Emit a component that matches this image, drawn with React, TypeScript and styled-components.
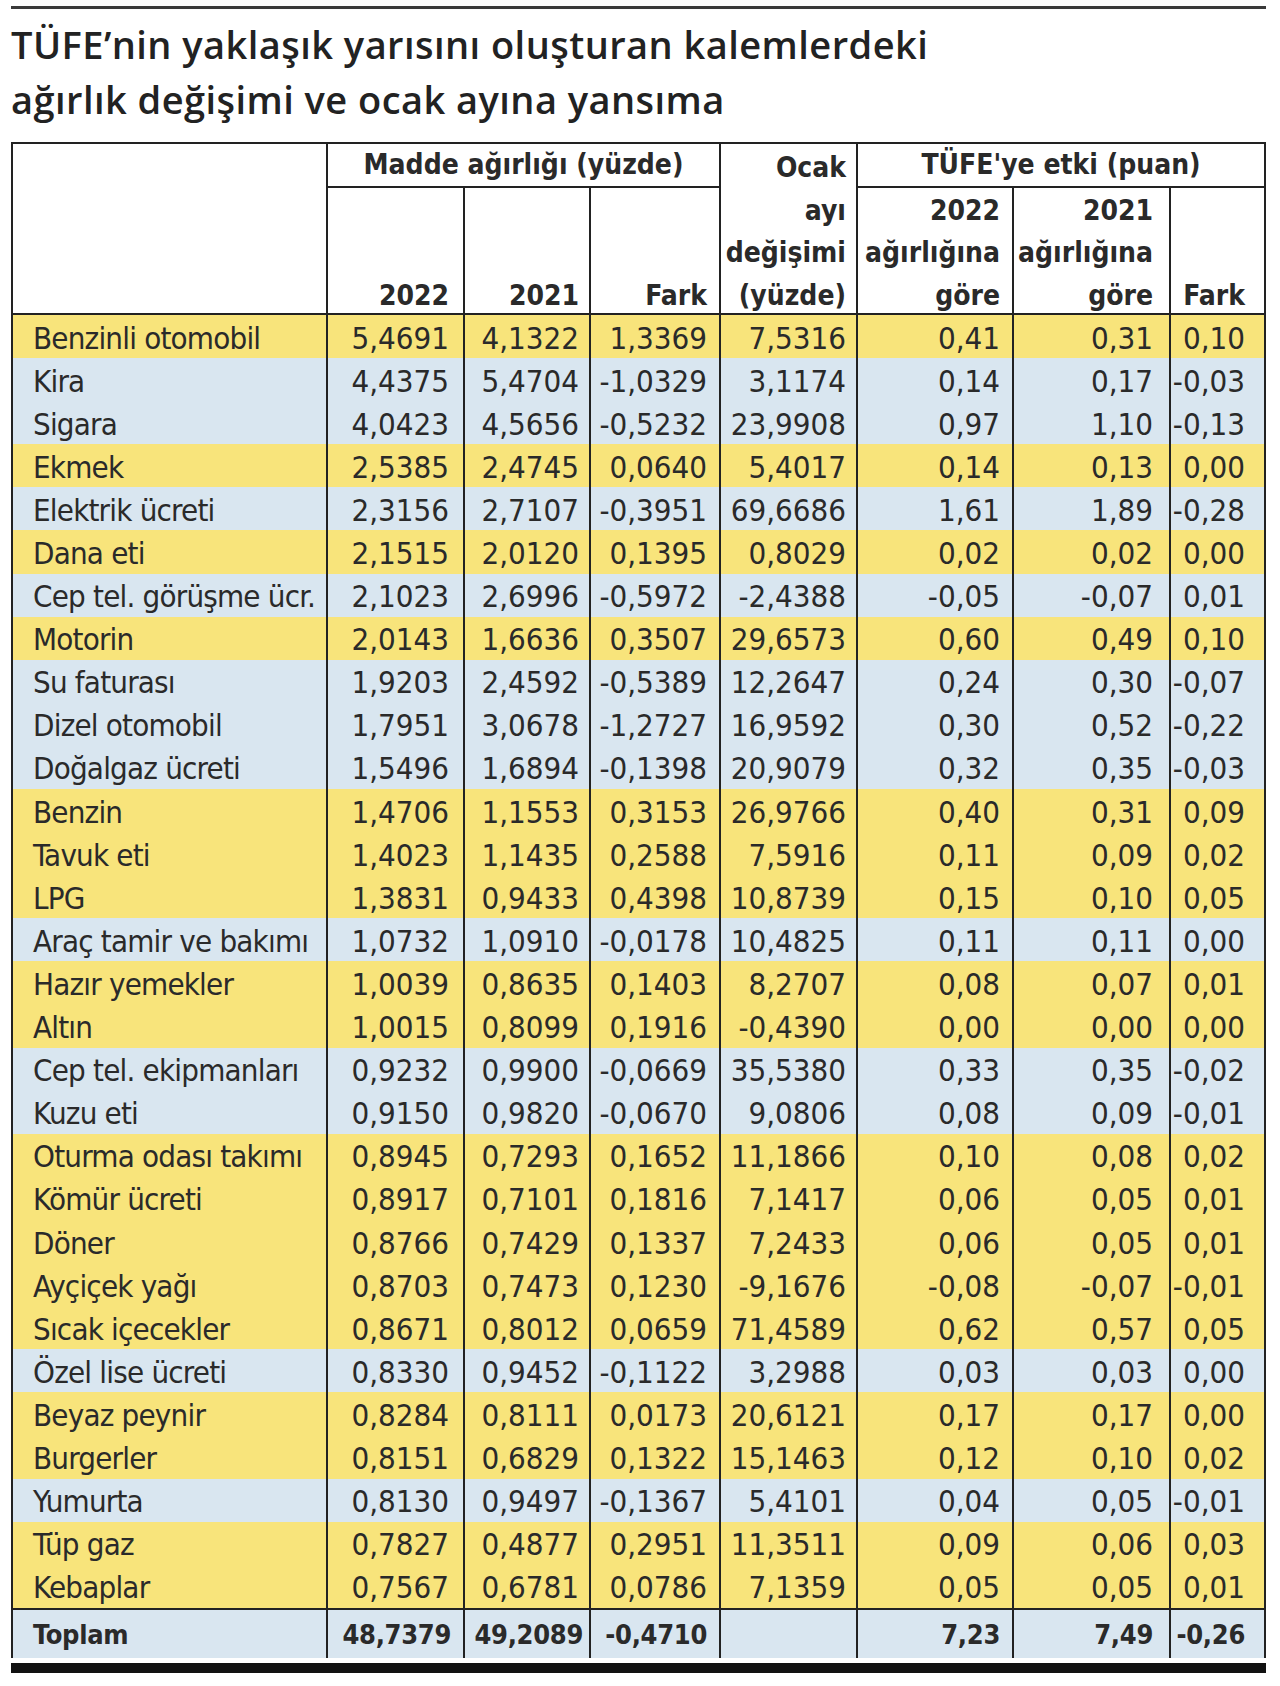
import React from "react";
import styled, { createGlobalStyle, css } from "styled-components";

const GlobalStyle = createGlobalStyle`
  html, body { margin: 0; padding: 0; background: #ffffff; }
  body { font-family: "DejaVu Sans Condensed", "DejaVu Sans", sans-serif; color: #2a2a2a; }
`;

type Tone = "yellow" | "blue" | "white";

const toneColor: Record<Tone, string> = {
  yellow: "#f8e47b",
  blue: "#d9e6f0",
  white: "#ffffff",
};

const COLS = [313, 137, 126, 130, 137, 156, 157, 95];
const PAD = [0, 14, 10, 12, 10, 12, 16, 19];
const TOTAL_PAD = [0, 12, 6, 12, 10, 12, 16, 19];

const Page = styled.div`
  width: 1255px;
  padding: 6px 0 0 11px;
`;

const TopRule = styled.div`
  height: 3px;
  background: #3a3a3a;
`;

const Title = styled.h1`
  margin: 8px 0 15px 0;
  font-family: "Open Sans", "DejaVu Sans", sans-serif;
  font-weight: 600;
  font-size: 38px;
  line-height: 55px;
  letter-spacing: 0.45px;
  color: #222;
`;

const Sheet = styled.div`
  display: grid;
  grid-template-columns: ${COLS.map((c) => `${c}px`).join(" ")};
  grid-template-rows: 44px 127px repeat(30, 43.1px) 50px;
  border: 2px solid #222;
  border-bottom: none;
  font-family: "DejaVu Sans Condensed", "DejaVu Sans", sans-serif;
  font-stretch: condensed;
`;

const HeadCell = styled.div<{
  $col: number;
  $span?: number;
  $row: number;
  $rowSpan?: number;
  $align?: "center" | "end";
}>`
  grid-column: ${(p) => p.$col} / span ${(p) => p.$span ?? 1};
  grid-row: ${(p) => p.$row} / span ${(p) => p.$rowSpan ?? 1};
  background: #fff;
  border-left: ${(p) => (p.$col > 1 ? "2px solid #222" : "none")};
  border-bottom: 2px solid #222;
  display: flex;
  flex-direction: column;
  justify-content: ${(p) => (p.$align === "center" ? "center" : "flex-end")};
  align-items: ${(p) => (p.$align === "center" ? "center" : "flex-end")};
  padding-right: ${(p) => (p.$align === "center" ? 0 : PAD[p.$col - 1])}px;
  font-weight: 700;
  font-size: 28px;
  line-height: 42.5px;
  color: #2a2a2a;
  text-align: right;
  white-space: nowrap;
`;

const HeadLines = styled.div`
  margin-bottom: -4px;
`;

const Cell = styled.div<{ $col: number; $tone: Tone; $total?: boolean }>`
  background: ${(p) => toneColor[p.$tone]};
  border-left: ${(p) => (p.$col > 1 ? "2px solid #222" : "none")};
  ${(p) =>
    p.$total &&
    css`
      border-top: 2px solid #222;
    `}
  display: flex;
  align-items: center;
  justify-content: ${(p) => (p.$col === 1 ? "flex-start" : "flex-end")};
  padding-left: ${(p) => (p.$col === 1 ? 20 : 0)}px;
  padding-right: ${(p) => (p.$total ? TOTAL_PAD[p.$col - 1] : PAD[p.$col - 1])}px;
  padding-top: 2px;
  font-size: ${(p) => (p.$total ? 27 : 31)}px;
  font-weight: ${(p) => (p.$total ? 700 : 400)};
  letter-spacing: ${(p) => (p.$col === 1 && !p.$total ? "-0.8px" : p.$total ? "-0.3px" : "0")};
  color: #2a2a2a;
  white-space: nowrap;
  overflow: hidden;
`;

const BottomBar = styled.div`
  height: 10px;
  margin-top: 5px;
  background: #111;
`;

const rows: string[][] = [
  ["Benzinli otomobil", "5,4691", "4,1322", "1,3369", "7,5316", "0,41", "0,31", "0,10"],
  ["Kira", "4,4375", "5,4704", "-1,0329", "3,1174", "0,14", "0,17", "-0,03"],
  ["Sigara", "4,0423", "4,5656", "-0,5232", "23,9908", "0,97", "1,10", "-0,13"],
  ["Ekmek", "2,5385", "2,4745", "0,0640", "5,4017", "0,14", "0,13", "0,00"],
  ["Elektrik ücreti", "2,3156", "2,7107", "-0,3951", "69,6686", "1,61", "1,89", "-0,28"],
  ["Dana eti", "2,1515", "2,0120", "0,1395", "0,8029", "0,02", "0,02", "0,00"],
  ["Cep tel. görüşme ücr.", "2,1023", "2,6996", "-0,5972", "-2,4388", "-0,05", "-0,07", "0,01"],
  ["Motorin", "2,0143", "1,6636", "0,3507", "29,6573", "0,60", "0,49", "0,10"],
  ["Su faturası", "1,9203", "2,4592", "-0,5389", "12,2647", "0,24", "0,30", "-0,07"],
  ["Dizel otomobil", "1,7951", "3,0678", "-1,2727", "16,9592", "0,30", "0,52", "-0,22"],
  ["Doğalgaz ücreti", "1,5496", "1,6894", "-0,1398", "20,9079", "0,32", "0,35", "-0,03"],
  ["Benzin", "1,4706", "1,1553", "0,3153", "26,9766", "0,40", "0,31", "0,09"],
  ["Tavuk eti", "1,4023", "1,1435", "0,2588", "7,5916", "0,11", "0,09", "0,02"],
  ["LPG", "1,3831", "0,9433", "0,4398", "10,8739", "0,15", "0,10", "0,05"],
  ["Araç tamir ve bakımı", "1,0732", "1,0910", "-0,0178", "10,4825", "0,11", "0,11", "0,00"],
  ["Hazır yemekler", "1,0039", "0,8635", "0,1403", "8,2707", "0,08", "0,07", "0,01"],
  ["Altın", "1,0015", "0,8099", "0,1916", "-0,4390", "0,00", "0,00", "0,00"],
  ["Cep tel. ekipmanları", "0,9232", "0,9900", "-0,0669", "35,5380", "0,33", "0,35", "-0,02"],
  ["Kuzu eti", "0,9150", "0,9820", "-0,0670", "9,0806", "0,08", "0,09", "-0,01"],
  ["Oturma odası takımı", "0,8945", "0,7293", "0,1652", "11,1866", "0,10", "0,08", "0,02"],
  ["Kömür ücreti", "0,8917", "0,7101", "0,1816", "7,1417", "0,06", "0,05", "0,01"],
  ["Döner", "0,8766", "0,7429", "0,1337", "7,2433", "0,06", "0,05", "0,01"],
  ["Ayçiçek yağı", "0,8703", "0,7473", "0,1230", "-9,1676", "-0,08", "-0,07", "-0,01"],
  ["Sıcak içecekler", "0,8671", "0,8012", "0,0659", "71,4589", "0,62", "0,57", "0,05"],
  ["Özel lise ücreti", "0,8330", "0,9452", "-0,1122", "3,2988", "0,03", "0,03", "0,00"],
  ["Beyaz peynir", "0,8284", "0,8111", "0,0173", "20,6121", "0,17", "0,17", "0,00"],
  ["Burgerler", "0,8151", "0,6829", "0,1322", "15,1463", "0,12", "0,10", "0,02"],
  ["Yumurta", "0,8130", "0,9497", "-0,1367", "5,4101", "0,04", "0,05", "-0,01"],
  ["Tüp gaz", "0,7827", "0,4877", "0,2951", "11,3511", "0,09", "0,06", "0,03"],
  ["Kebaplar", "0,7567", "0,6781", "0,0786", "7,1359", "0,05", "0,05", "0,01"],
];

const total = ["Toplam", "48,7379", "49,2089", "-0,4710", "", "7,23", "7,49", "-0,26"];

const lines = (items: string[]) => (
  <HeadLines>
    {items.map((t, i) => (
      <div key={i}>{t}</div>
    ))}
  </HeadLines>
);

export default function App() {
  return (
    <>
      <GlobalStyle />
      <Page>
        <TopRule />
        <Title>
          TÜFE’nin yaklaşık yarısını oluşturan kalemlerdeki
          <br />
          ağırlık değişimi ve ocak ayına yansıma
        </Title>
        <Sheet>
          <HeadCell $col={1} $row={1} $rowSpan={2} />
          <HeadCell $col={2} $span={3} $row={1} $align="center">
            Madde ağırlığı (yüzde)
          </HeadCell>
          <HeadCell $col={5} $row={1} $rowSpan={2}>
            {lines(["Ocak", "ayı", "değişimi", "(yüzde)"])}
          </HeadCell>
          <HeadCell $col={6} $span={3} $row={1} $align="center">
            TÜFE'ye etki (puan)
          </HeadCell>
          <HeadCell $col={2} $row={2}>{lines(["2022"])}</HeadCell>
          <HeadCell $col={3} $row={2}>{lines(["2021"])}</HeadCell>
          <HeadCell $col={4} $row={2}>{lines(["Fark"])}</HeadCell>
          <HeadCell $col={6} $row={2}>{lines(["2022", "ağırlığına", "göre"])}</HeadCell>
          <HeadCell $col={7} $row={2}>{lines(["2021", "ağırlığına", "göre"])}</HeadCell>
          <HeadCell $col={8} $row={2}>{lines(["Fark"])}</HeadCell>
          {rows.map((r, ri) => {
            const tone: Tone = r[3].startsWith("-") ? "blue" : "yellow";
            return r.map((v, ci) => (
              <Cell key={`${ri}-${ci}`} $col={ci + 1} $tone={tone}>
                {v}
              </Cell>
            ));
          })}
          {total.map((v, ci) => (
            <Cell key={`t-${ci}`} $col={ci + 1} $tone="blue" $total>
              {v}
            </Cell>
          ))}
        </Sheet>
        <BottomBar />
      </Page>
    </>
  );
}
